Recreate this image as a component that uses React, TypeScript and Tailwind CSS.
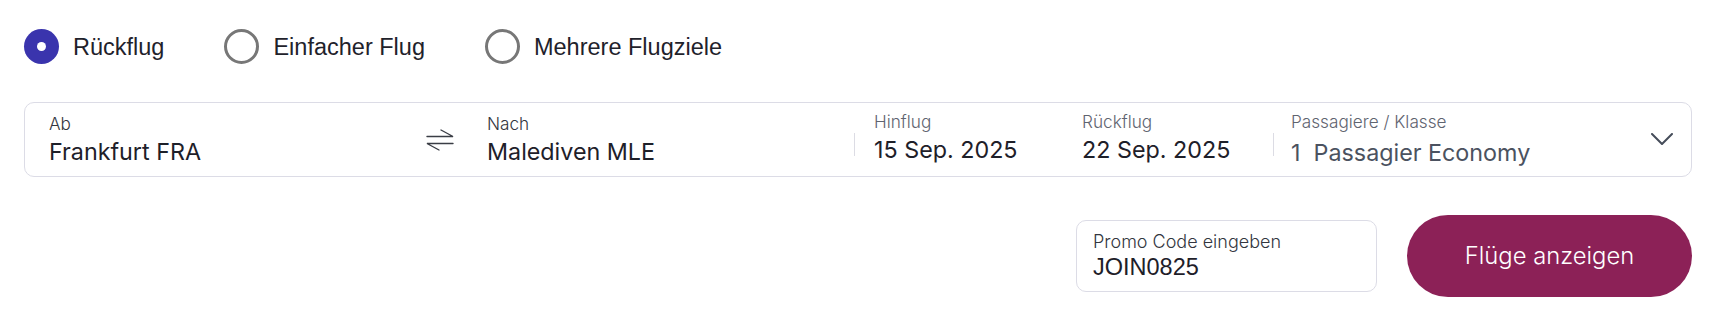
import React from "react";

function Radio({ label, checked }: { label: string; checked?: boolean }) {
    return (
        <label className="flex items-center gap-[14px] cursor-pointer">
            {checked ? (
                <span className="w-[35px] h-[35px] rounded-full bg-[#3a34ad] flex items-center justify-center">
                    <span className="w-[9px] h-[9px] rounded-full bg-white" />
                </span>
            ) : (
                <span className="w-[35px] h-[35px] rounded-full border-[3px] border-[#777777]" />
            )}
            <span className="text-[23.5px] leading-[28px] text-[#1f222b] font-['Liberation_Sans',Arial,sans-serif]">
                {label}
            </span>
        </label>
    );
}

function Field({
    label,
    value,
    className,
    muted,
}: {
    label: string;
    value: string;
    className?: string;
    muted?: boolean;
}) {
    return (
        <div className={`flex flex-col ${className ?? ""}`}>
            <span className={`text-[17.2px] leading-[20px] font-light ${muted ? "text-[#5f6470]" : "text-[#333640]"}`}>{label}</span>
            <span className="text-[23.3px] leading-[28px] mt-[4px] text-[#1e2029] whitespace-pre">{value}</span>
        </div>
    );
}

export default function App() {
    return (
        <div className="w-full h-[322px] bg-white pl-[24px] pr-[22px] pt-[29px] font-['Inter','Noto_Sans',sans-serif]">
            {/* Trip type */}
            <div className="flex items-center gap-[60px]">
                <Radio label="Rückflug" checked />
                <Radio label="Einfacher Flug" />
                <Radio label="Mehrere Flugziele" />
            </div>

            {/* Search card */}
            <div className="mt-[38px] h-[75px] rounded-[10px] border border-[#dcdce6] flex items-center pl-[24px] pr-[18px]">
                <Field label="Ab" value="Frankfurt FRA" className="w-[377px]" />
                <svg width="28" height="22" viewBox="0 0 28 22" fill="none" stroke="#3a3d45" strokeWidth="1.4" strokeLinecap="round">
                    <path d="M1 7.5H27L15 1" />
                    <path d="M27 14.5H1L13 21" />
                </svg>
                <Field label="Nach" value="Malediven MLE" className="ml-[33px] w-[367px]" />
                <div className="w-px h-[23px] bg-[#dcdce4] mt-[10px]" />
                <Field label="Hinflug" value="15 Sep. 2025" className="ml-[19px] w-[208px] -mt-[3px]" muted />
                <Field label="Rückflug" value="22 Sep. 2025" className="w-[191px] -mt-[3px]" muted />
                <div className="w-px h-[23px] bg-[#dcdce4] mt-[10px]" />
                <div className="ml-[17px] flex-1 flex flex-col">
                    <span className="text-[17.2px] leading-[20px] font-light text-[#5f6470]">Passagiere / Klasse</span>
                    <span className="text-[23.3px] leading-[28px] mt-[7px] text-[#4b5260] whitespace-pre">1  Passagier Economy</span>
                </div>
                <svg width="22" height="12" viewBox="0 0 22 12" fill="none" stroke="#464d5a" strokeWidth="2" strokeLinecap="round" strokeLinejoin="round" className="mt-[-2px]">
                    <path d="M1 1L11 11L21 1" />
                </svg>
            </div>

            {/* Promo + submit */}
            <div className="mt-[38px] flex items-center justify-end gap-[30px]">
                <div className="w-[301px] h-[72px] rounded-[10px] border border-[#dcdce6] pl-[16px] flex flex-col justify-center">
                    <span className="text-[18px] leading-[20px] font-light text-[#333640]">Promo Code eingeben</span>
                    <span className="text-[23.5px] leading-[26px] mt-[2px] text-[#1e2029] font-['Liberation_Sans',Arial,sans-serif]">JOIN0825</span>
                </div>
                <button className="w-[285px] h-[82px] rounded-full bg-[#8c2157] text-white text-[23.8px] font-light">
                    Flüge anzeigen
                </button>
            </div>
        </div>
    );
}
